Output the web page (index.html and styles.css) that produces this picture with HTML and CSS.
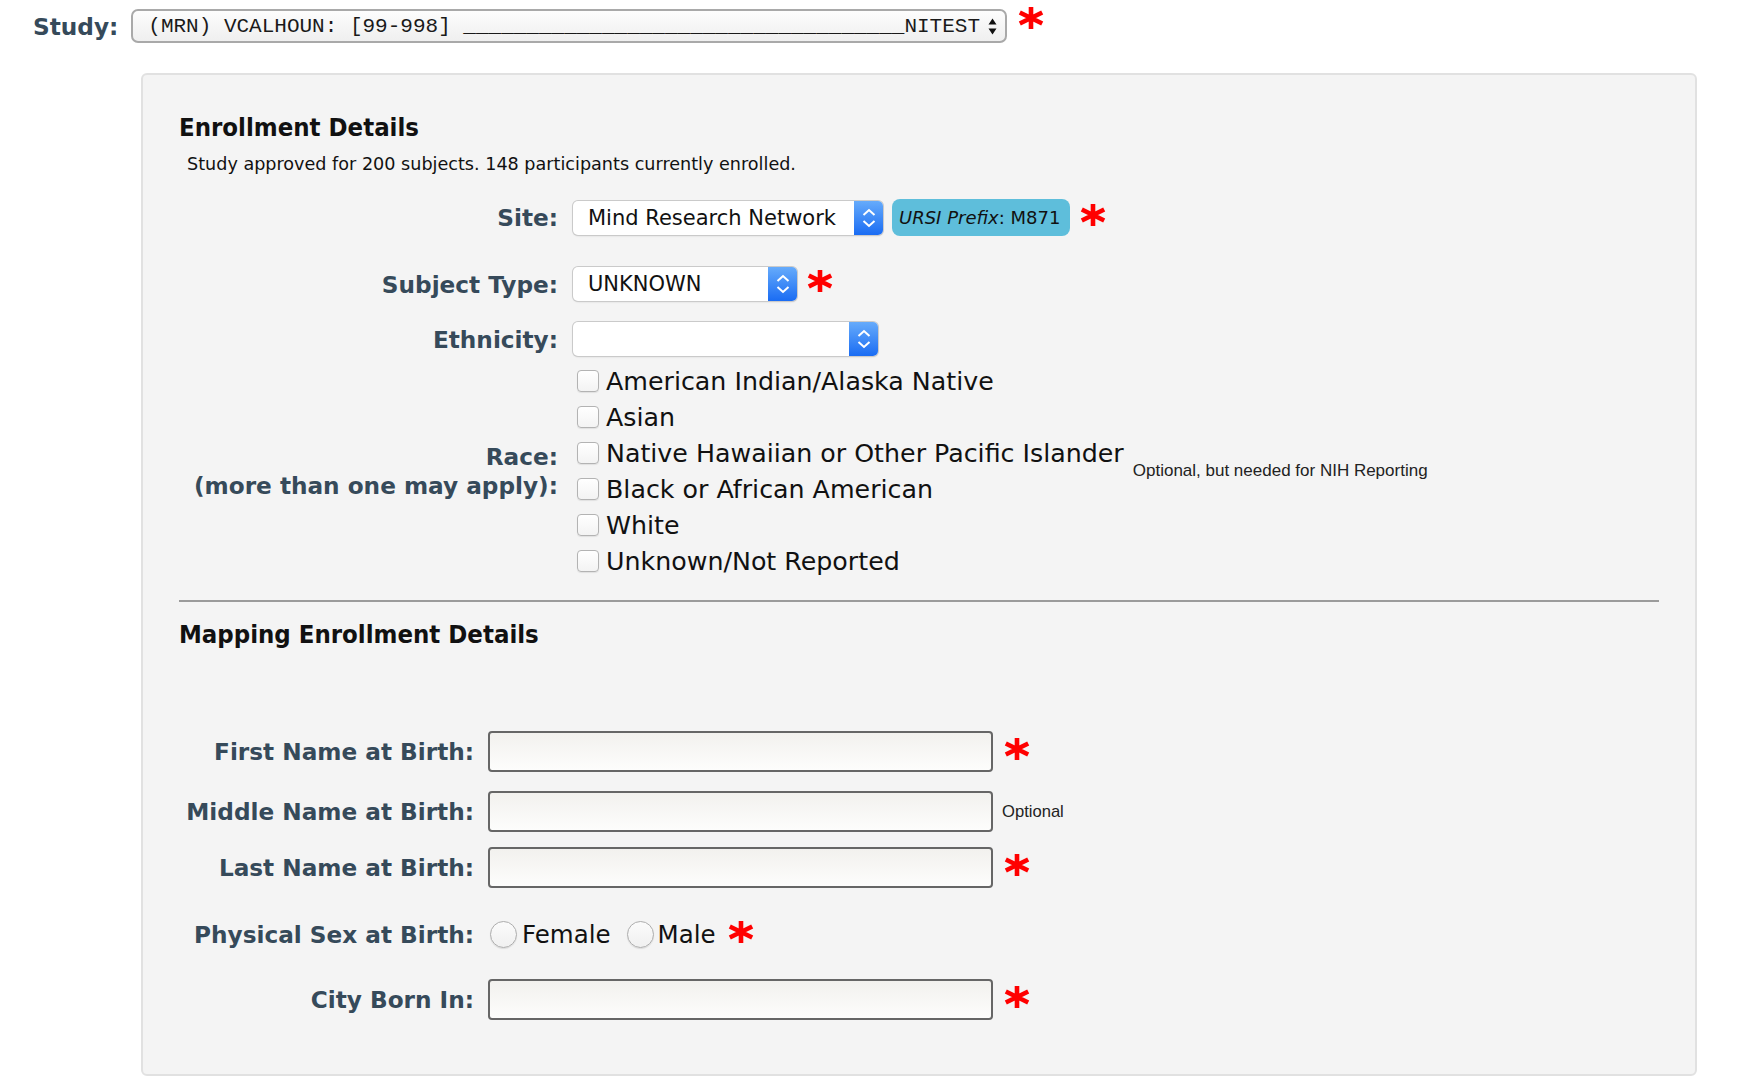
FILE: index.html
```html
<!DOCTYPE html>
<html lang="en">
<head>
    <meta charset="UTF-8">
    <title>Enrollment</title>
    <link rel="stylesheet" href="styles.css">
</head>
<body>
<div class="study-row">
    <label class="field-label" for="study">Study:</label>
    <div class="study-select">
        <span class="study-text">(MRN) VCALHOUN: [99-998] ___________________________________NITEST</span>
        <svg class="updown" width="9" height="17" viewBox="0 0 9 17"><path d="M4.5 0.5L8.5 6.5H0.5Z M4.5 16.5L8.5 10.5H0.5Z" fill="#111"/></svg>
    </div>
    <svg class="req req-study" width="26" height="24" viewBox="0 0 26 24"><path d="M13 1V23M1.8 6.5L24.2 17.5M1.8 17.5L24.2 6.5" stroke="#f00" stroke-width="4.6"/></svg>
</div>

<div class="panel">
    <h2>Enrollment Details</h2>
    <p class="summary">Study approved for 200 subjects. 148 participants currently enrolled.</p>

    <div class="row site-row">
        <label class="field-label">Site:</label>
        <div class="picker picker-site">
            <select><option>Mind Research Network</option></select>
            <span class="picker-btn"><svg width="16" height="22" viewBox="0 0 16 22"><path d="M2.5 8L8 3L13.5 8M2.5 14L8 19L13.5 14" fill="none" stroke="#fff" stroke-width="2"/></svg></span>
        </div>
        <span class="ursi"><em>URSI Prefix</em>: <b>M871</b></span>
        <svg class="req" width="26" height="24" viewBox="0 0 26 24"><path d="M13 1V23M1.8 6.5L24.2 17.5M1.8 17.5L24.2 6.5" stroke="#f00" stroke-width="4.6"/></svg>
    </div>

    <div class="row subject-row">
        <label class="field-label">Subject Type:</label>
        <div class="picker picker-subject">
            <select><option>UNKNOWN</option></select>
            <span class="picker-btn"><svg width="16" height="22" viewBox="0 0 16 22"><path d="M2.5 8L8 3L13.5 8M2.5 14L8 19L13.5 14" fill="none" stroke="#fff" stroke-width="2"/></svg></span>
        </div>
        <svg class="req" width="26" height="24" viewBox="0 0 26 24"><path d="M13 1V23M1.8 6.5L24.2 17.5M1.8 17.5L24.2 6.5" stroke="#f00" stroke-width="4.6"/></svg>
    </div>

    <div class="row ethnicity-row">
        <label class="field-label">Ethnicity:</label>
        <div class="picker picker-ethnicity">
            <select><option></option></select>
            <span class="picker-btn"><svg width="16" height="22" viewBox="0 0 16 22"><path d="M2.5 8L8 3L13.5 8M2.5 14L8 19L13.5 14" fill="none" stroke="#fff" stroke-width="2"/></svg></span>
        </div>
    </div>

    <div class="row race-row">
        <label class="field-label">Race:<br>(more than one may apply):</label>
        <div class="checks">
            <label class="check"><input type="checkbox">American Indian/Alaska Native</label>
            <label class="check"><input type="checkbox">Asian</label>
            <label class="check"><input type="checkbox">Native Hawaiian or Other Pacific Islander</label>
            <label class="check"><input type="checkbox">Black or African American</label>
            <label class="check"><input type="checkbox">White</label>
            <label class="check"><input type="checkbox">Unknown/Not Reported</label>
        </div>
        <span class="note">Optional, but needed for NIH Reporting</span>
    </div>

    <hr>

    <h2>Mapping Enrollment Details</h2>

    <div class="lower">
        <div class="row first-row">
            <label class="field-label">First Name at Birth:</label>
            <input type="text" class="text-input">
            <svg class="req" width="26" height="24" viewBox="0 0 26 24"><path d="M13 1V23M1.8 6.5L24.2 17.5M1.8 17.5L24.2 6.5" stroke="#f00" stroke-width="4.6"/></svg>
        </div>
        <div class="row middle-row">
            <label class="field-label">Middle Name at Birth:</label>
            <input type="text" class="text-input">
            <span class="note note-small">Optional</span>
        </div>
        <div class="row last-row">
            <label class="field-label">Last Name at Birth:</label>
            <input type="text" class="text-input">
            <svg class="req" width="26" height="24" viewBox="0 0 26 24"><path d="M13 1V23M1.8 6.5L24.2 17.5M1.8 17.5L24.2 6.5" stroke="#f00" stroke-width="4.6"/></svg>
        </div>
        <div class="row sex-row">
            <label class="field-label">Physical Sex at Birth:</label>
            <label class="radio"><input type="radio" name="sex">Female</label>
            <label class="radio"><input type="radio" name="sex">Male</label>
            <svg class="req" width="26" height="24" viewBox="0 0 26 24"><path d="M13 1V23M1.8 6.5L24.2 17.5M1.8 17.5L24.2 6.5" stroke="#f00" stroke-width="4.6"/></svg>
        </div>
        <div class="row city-row">
            <label class="field-label">City Born In:</label>
            <input type="text" class="text-input">
            <svg class="req" width="26" height="24" viewBox="0 0 26 24"><path d="M13 1V23M1.8 6.5L24.2 17.5M1.8 17.5L24.2 6.5" stroke="#f00" stroke-width="4.6"/></svg>
        </div>
    </div>
</div>
</body>
</html>
```

FILE: styles.css
```css
* { box-sizing: border-box; }

body {
    margin: 0;
    background: #fff;
    font-family: "DejaVu Sans", Verdana, sans-serif;
    color: #111;
}

.field-label {
    font-weight: bold;
    font-size: 23.2px;
    color: #364a5a;
    text-align: right;
    flex: none;
}

/* study picker on top */
.study-row {
    display: flex;
    align-items: center;
    gap: 13px;
    padding: 9px 0 0 33px;
}

.study-select {
    width: 876px;
    height: 34px;
    display: flex;
    align-items: center;
    justify-content: space-between;
    padding: 0 8px 0 15px;
    border: 2px solid #a9a9a9;
    border-radius: 7px;
    background: linear-gradient(#fdfdfd, #efefef);
    font-family: "Liberation Mono", monospace;
    font-size: 21px;
    color: #1a1a1a;
    white-space: pre;
}

.req {
    flex: none;
    margin-left: 10px;
    margin-bottom: 6px;
}

.req-study {
    margin-left: -2px;
    align-self: flex-start;
    margin-top: -3px;
}

/* main panel */
.panel {
    width: 1556px;
    margin: 30px 0 0 141px;
    padding: 37px 36px 54px;
    background: #f4f4f4;
    border: 2px solid #e1e1e1;
    border-radius: 6px;
}

h2 {
    margin: 0;
    font-family: "DejaVu Sans Condensed", "DejaVu Sans", sans-serif;
    font-size: 25.5px;
    line-height: 31px;
    font-weight: bold;
    color: #111;
}

.summary {
    margin: 11px 0 0 8px;
    font-size: 17.6px;
    line-height: 21px;
}

.row {
    display: flex;
    align-items: center;
}

.row > .field-label {
    width: 379px;
    margin-right: 15px;
}

.site-row { margin-top: 24px; }
.subject-row { margin-top: 31px; }
.ethnicity-row { margin-top: 21px; }
.race-row { margin-top: 7px; }

/* mac style selects */
.picker {
    display: flex;
    height: 34px;
    border-radius: 5px;
    background: #fff;
    box-shadow: 0 0 0 1px #cacaca, 0 1px 2px rgba(0, 0, 0, 0.15);
}

.picker select {
    flex: 1;
    min-width: 0;
    appearance: none;
    -webkit-appearance: none;
    border: 0;
    background: transparent;
    padding: 0 15px;
    font-family: "DejaVu Sans", sans-serif;
    font-size: 21px;
    color: #111;
    outline: none;
}

.picker-btn {
    width: 29px;
    display: flex;
    align-items: center;
    justify-content: center;
    border-radius: 0 5px 5px 0;
    background: linear-gradient(#66abfb, #1a6cf3);
}

.picker-site { width: 310px; }
.picker-subject { width: 224px; }
.picker-ethnicity { width: 305px; }

.ursi {
    height: 37px;
    margin-left: 9px;
    padding: 0 10px 0 7px;
    display: flex;
    align-items: center;
    white-space: pre;
    background: #5ebedb;
    border-radius: 8px;
    font-size: 18px;
    color: #111;
}

.ursi b { font-weight: normal; }

.race-row .field-label { line-height: 29px; }

.checks {
    display: flex;
    flex-direction: column;
}

.check {
    display: flex;
    align-items: center;
    height: 36px;
    font-size: 25.3px;
    white-space: nowrap;
}

.check input {
    appearance: none;
    -webkit-appearance: none;
    width: 22px;
    height: 22px;
    margin: 0 7px 0 4px;
    border: 1px solid #b3b3b3;
    border-radius: 4px;
    background: linear-gradient(#fff, #f3f3f3);
    box-shadow: 0 1px 1px rgba(0, 0, 0, 0.08);
}

.note {
    margin-left: 9px;
    font-family: "Liberation Sans", Arial, sans-serif;
    font-size: 17px;
    color: #222;
}

hr {
    margin: 21px 0 17px;
    border: 0;
    border-top: 2px solid #9b9b9b;
}

/* lower section */
.lower .row > .field-label {
    width: 295px;
    margin-right: 14px;
}

.first-row { margin-top: 81px; }
.middle-row { margin-top: 19px; }
.last-row { margin-top: 15px; }
.sex-row { margin-top: 26px; height: 41px; }
.city-row { margin-top: 24px; }

.text-input {
    width: 505px;
    height: 41px;
    border: 2px solid #666;
    border-radius: 4px;
    background: linear-gradient(#f2f1ee, #fdfdfc);
    font-size: 18px;
}

.lower .req { margin-left: 11px; }
.lower .sex-row .req { margin-left: 12px; }

.note-small { font-size: 16.6px; }

.radio {
    display: flex;
    align-items: center;
    font-size: 24.5px;
}

.radio + .radio { margin-left: 14px; }

.radio input {
    appearance: none;
    -webkit-appearance: none;
    width: 27px;
    height: 27px;
    margin: 0 5px 0 2px;
    border: 1px solid #adadad;
    border-radius: 50%;
    background: linear-gradient(#fbfbfb, #f0f0f0);
    box-shadow: 0 1px 1px rgba(0, 0, 0, 0.1);
}

.radio + .radio input { margin-right: 4px; }
```
